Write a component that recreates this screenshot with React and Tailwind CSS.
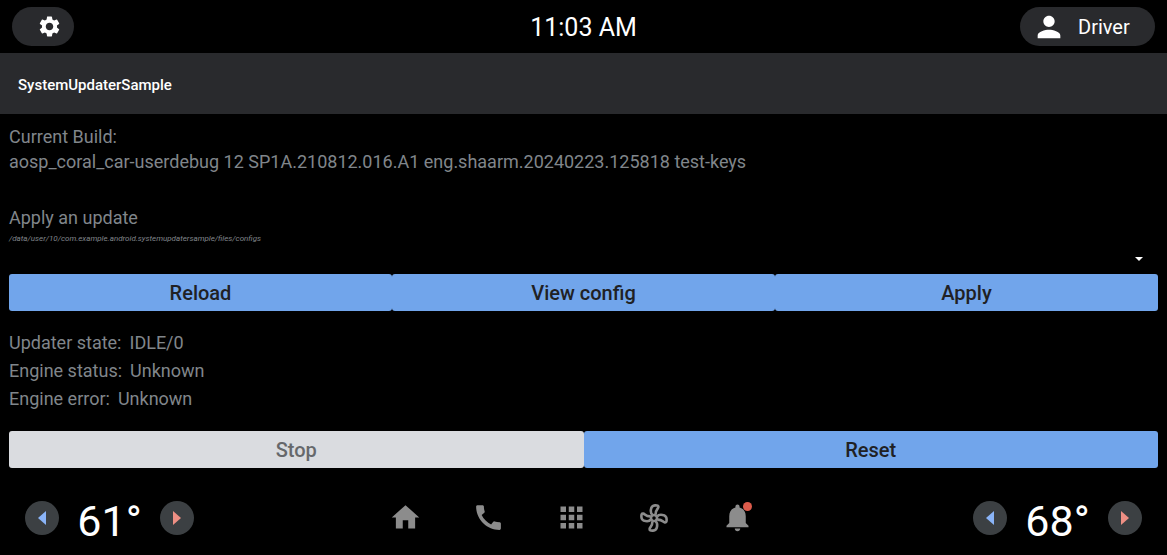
import { useState } from 'react'

const NAV_ITEMS = [
  { id: 'home', label: 'Home', path: 'M10 20v-6h4v6h5v-8h3L12 3 2 12h3v8z' },
  {
    id: 'phone',
    label: 'Phone',
    path: 'M20.01 15.38c-1.23 0-2.42-.2-3.53-.56a.98.98 0 0 0-1.01.24l-1.57 1.97c-2.83-1.35-5.48-3.9-6.89-6.83l1.95-1.66c.27-.28.35-.67.24-1.02-.37-1.11-.56-2.3-.56-3.53 0-.54-.45-.99-.99-.99H4.19C3.65 3 3 3.24 3 3.99 3 13.28 10.73 21 20.01 21c.71 0 .99-.63.99-1.18v-3.45c0-.54-.45-.99-.99-.99z',
  },
  {
    id: 'apps',
    label: 'Apps',
    path: 'M4 8h4V4H4v4zm6 12h4v-4h-4v4zm-6 0h4v-4H4v4zm0-6h4v-4H4v4zm6 0h4v-4h-4v4zm6-10v4h4V4h-4zm-6 4h4V4h-4v4zm6 6h4v-4h-4v4zm0 6h4v-4h-4v4z',
  },
  { id: 'climate', label: 'Climate' },
  {
    id: 'notifications',
    label: 'Notifications',
    badge: true,
    path: 'M12 22c1.1 0 2-.9 2-2h-4c0 1.1.89 2 2 2zm6-6v-5c0-3.07-1.64-5.64-4.5-6.32V4c0-.83-.67-1.5-1.5-1.5s-1.5.67-1.5 1.5v.68C7.63 5.36 6 7.92 6 11v5l-2 2v1h16v-1l-2-2z',
  },
]

const STATUS_ROWS = [
  { label: 'Updater state:', value: 'IDLE/0' },
  { label: 'Engine status:', value: 'Unknown' },
  { label: 'Engine error:', value: 'Unknown' },
]

function FanIcon() {
  const blade = 'M-1.6 -3.2C-4 -5 -4 -12.4 1 -12.6C3.6 -12.7 4.6 -12.4 4.4 -10.8C4.2 -9 1.4 -8.6 1.6 -3.2'

  return (
    <svg viewBox="-17 -17 34 34" className="size-[34px]" fill="none" stroke="currentColor" strokeWidth="2.6" aria-hidden="true">
      <circle r="3" />
      {[0, 90, 180, 270].map(angle => (
        <path key={angle} d={blade} transform={`rotate(${angle})`} />
      ))}
    </svg>
  )
}

function ActionButton({ children, disabled, onClick }) {
  return (
    <button
      disabled={disabled}
      onClick={onClick}
      className="h-[37px] rounded-[3px] bg-[#71a5eb] text-xl font-medium text-[#202124] disabled:bg-[#dadce0] disabled:text-[#66686b]"
    >
      {children}
    </button>
  )
}

function Temperature({ name, initial }) {
  const [degrees, setDegrees] = useState(initial)

  return (
    <div className="flex items-center">
      <button
        onClick={() => setDegrees(degrees - 1)}
        aria-label={`${name} cooler`}
        className="flex size-[34px] items-center justify-center rounded-full bg-[#3c4043] text-[#8ab4f8]"
      >
        <svg viewBox="0 0 8 14" className="h-[14px] w-2" fill="currentColor" aria-hidden="true">
          <path d="M8 0v14L0 7z" />
        </svg>
      </button>
      <span className="w-[101px] pt-[6px] text-center text-[43px] leading-[52px]">{degrees}°</span>
      <button
        onClick={() => setDegrees(degrees + 1)}
        aria-label={`${name} warmer`}
        className="flex size-[34px] items-center justify-center rounded-full bg-[#3c4043] text-[#ee8f84]"
      >
        <svg viewBox="0 0 8 14" className="h-[14px] w-2" fill="currentColor" aria-hidden="true">
          <path d="M0 0v14l8-7z" />
        </svg>
      </button>
    </div>
  )
}

export default function App() {
  const [config, setConfig] = useState('')
  const [status, setStatus] = useState(STATUS_ROWS)

  return (
    <div className="flex min-h-screen flex-col bg-black font-['Roboto',sans-serif] text-white">
      <header className="grid h-[53px] grid-cols-3 items-center px-3">
        <button aria-label="Settings" className="flex h-[39px] w-[62px] items-center justify-end rounded-full bg-[#292a2d] pr-3">
          <svg viewBox="0 0 24 24" className="size-[25px]" fill="currentColor" aria-hidden="true">
            <path d="M19.14 12.94c.04-.3.06-.61.06-.94 0-.32-.02-.64-.07-.94l2.03-1.58a.49.49 0 0 0 .12-.61l-1.92-3.32a.488.488 0 0 0-.59-.22l-2.39.96c-.5-.38-1.03-.7-1.62-.94l-.36-2.54a.484.484 0 0 0-.48-.41h-3.84c-.24 0-.43.17-.47.41l-.36 2.54c-.59.24-1.13.57-1.62.94l-2.39-.96c-.22-.08-.47 0-.59.22L2.74 8.87c-.12.21-.08.47.12.61l2.03 1.58c-.05.3-.09.63-.09.94s.02.64.07.94l-2.03 1.58a.49.49 0 0 0-.12.61l1.92 3.32c.12.22.37.29.59.22l2.39-.96c.5.38 1.03.7 1.62.94l.36 2.54c.05.24.24.41.48.41h3.84c.24 0 .44-.17.47-.41l.36-2.54c.59-.24 1.13-.56 1.62-.94l2.39.96c.22.08.47 0 .59-.22l1.92-3.32c.12-.22.07-.47-.12-.61l-2.01-1.58zM12 15.6c-1.98 0-3.6-1.62-3.6-3.6s1.62-3.6 3.6-3.6 3.6 1.62 3.6 3.6-1.62 3.6-3.6 3.6z" />
          </svg>
        </button>
        <time className="pt-[2px] text-center text-[25px] leading-8">11:03 AM</time>
        <button className="flex h-[39px] w-[135px] items-center gap-3 justify-self-end rounded-full bg-[#292a2d] pl-3 text-xl">
          <svg viewBox="0 0 24 24" className="size-[34px]" fill="currentColor" aria-hidden="true">
            <path d="M12 12c2.21 0 4-1.79 4-4s-1.79-4-4-4-4 1.79-4 4 1.79 4 4 4zm0 2c-2.67 0-8 1.34-8 4v2h16v-2c0-2.66-5.33-4-8-4z" />
          </svg>
          Driver
        </button>
      </header>

      <div className="flex h-[61px] items-center bg-[#292a2d] px-[18px] pt-[2px]">
        <h1 className="text-[15px] leading-6 font-medium">SystemUpdaterSample</h1>
      </div>

      <main className="flex-1 px-[9px] pt-[10px] text-lg leading-[25px] text-[#80868b]">
        <p>Current Build:</p>
        <p>aosp_coral_car-userdebug 12 SP1A.210812.016.A1 eng.shaarm.20240223.125818 test-keys</p>

        <label htmlFor="config" className="mt-[31px] block">Apply an update</label>
        <p className="text-[8px] leading-[17px] italic">/data/user/10/com.example.android.systemupdatersample/files/configs</p>
        <div className="relative h-[27px]">
          <select
            id="config"
            value={config}
            onChange={(e) => setConfig(e.target.value)}
            className="h-full w-full appearance-none bg-transparent"
          >
            <option value=""></option>
          </select>
          <svg viewBox="0 0 8 4" className="pointer-events-none absolute right-[15px] bottom-[13px] h-1 w-2 fill-white" aria-hidden="true">
            <path d="M0 0h8L4 4z" />
          </svg>
        </div>

        <div className="grid grid-cols-3">
          <ActionButton onClick={() => setStatus(STATUS_ROWS)}>Reload</ActionButton>
          <ActionButton>View config</ActionButton>
          <ActionButton>Apply</ActionButton>
        </div>

        <dl className="my-[18px] leading-7">
          {status.map(row => (
            <div key={row.label} className="flex gap-2">
              <dt>{row.label}</dt>
              <dd>{row.value}</dd>
            </div>
          ))}
        </dl>

        <div className="grid grid-cols-2">
          <ActionButton disabled>Stop</ActionButton>
          <ActionButton onClick={() => setStatus(STATUS_ROWS)}>Reset</ActionButton>
        </div>
      </main>

      <footer className="flex h-[75px] items-center justify-between px-[25px]">
        <Temperature name="Driver" initial={61} />
        <nav className="flex gap-[49px] pr-[25px] text-[#8c8c8c]">
          {NAV_ITEMS.map(item => (
            <button key={item.id} aria-label={item.label} className="relative flex size-[34px] items-center justify-center">
              {item.path ? (
                <svg viewBox="0 0 24 24" className="size-[33px]" fill="currentColor" aria-hidden="true">
                  <path d={item.path} />
                </svg>
              ) : (
                <FanIcon />
              )}
              {item.badge && <span className="absolute top-px right-[2px] size-[9px] rounded-full bg-[#dc5b4b]" />}
            </button>
          ))}
        </nav>
        <Temperature name="Passenger" initial={68} />
      </footer>
    </div>
  )
}
